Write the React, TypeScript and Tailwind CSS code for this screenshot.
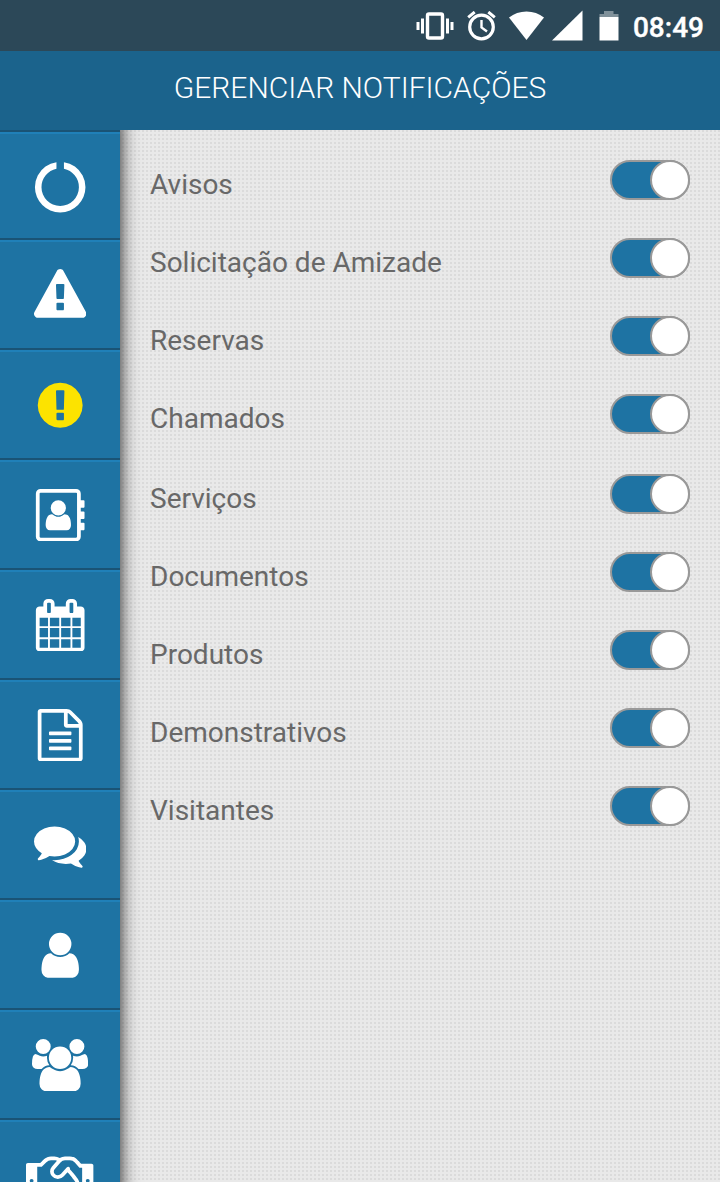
import { useState } from 'react';
import clsx from 'clsx';

interface MenuItem {
  name: string;
  path: string;
  width?: number;
  color?: string;
}

const menu: MenuItem[] = [
  {
    name: 'inicio',
    path: 'M1760 896q0 176-68.5 336t-184 275.5-275.5 184-336 68.5-336-68.5-275.5-184-184-275.5-68.5-336q0-213 97-398.5t265-305.5 374-151v228q-221 45-366.5 221t-145.5 406q0 130 51 248.5t136.5 204 204 136.5 248.5 51 248.5-51 204-136.5 136.5-204 51-248.5q0-230-145.5-406t-366.5-221v-228q206 31 374 151t265 305.5 97 398.5z',
  },
  {
    name: 'alertas',
    path: 'M1024 1375v-190q0-14-9.5-23.5t-22.5-9.5h-192q-13 0-22.5 9.5t-9.5 23.5v190q0 14 9.5 23.5t22.5 9.5h192q13 0 22.5-9.5t9.5-23.5zm-2-374l18-459q0-12-10-19-13-11-24-11h-220q-11 0-24 11-10 7-10 21l17 457q0 10 10 16.5t24 6.5h185q14 0 23.5-6.5t10.5-16.5zm-14-934l768 1408q35 63-2 126-17 29-46.5 46t-63.5 17h-1536q-34 0-63.5-17t-46.5-46q-37-63-2-126l768-1408q17-31 47-49t65-18 65 18 47 49z',
  },
  {
    name: 'avisos',
    color: 'text-[#fce300]',
    path: 'M896 128q209 0 385.5 103t279.5 279.5 103 385.5-103 385.5-279.5 279.5-385.5 103-385.5-103-279.5-279.5-103-385.5 103-385.5 279.5-279.5 385.5-103zm128 1247v-190q0-14-9-23.5t-22-9.5h-192q-13 0-23 10t-10 23v190q0 13 10 23t23 10h192q13 0 22-9.5t9-23.5zm-2-344l18-621q0-12-10-18-10-8-24-8h-220q-14 0-24 8-10 6-10 18l17 621q0 10 10 17.5t24 7.5h185q14 0 23.5-7.5t10.5-17.5z',
  },
  {
    name: 'contatos',
    path: 'M1092 644q0 107-76.5 183t-183.5 76-183.5-76-76.5-183q0-108 76.5-184t183.5-76 183.5 76 76.5 184zm-48 220q46 0 82.5 17t60 47.5 39.5 67 24 81 11.5 82.5 3.5 79q0 67-39.5 118.5t-105.5 51.5h-576q-66 0-105.5-51.5t-39.5-118.5q0-48 4.5-93.5t18.5-98.5 36.5-91.5 63-64.5 93.5-26h5q7 4 32 19.5t35.5 21 33 17 37 16 35 9 39.5 4.5 39.5-4.5 35-9 37-16 33-17 35.5-21 32-19.5zm684-256q0 13-9.5 22.5t-22.5 9.5h-96v128h96q13 0 22.5 9.5t9.5 22.5v192q0 13-9.5 22.5t-22.5 9.5h-96v128h96q13 0 22.5 9.5t9.5 22.5v192q0 13-9.5 22.5t-22.5 9.5h-96v224q0 66-47 113t-113 47h-1216q-66 0-113-47t-47-113v-1472q0-66 47-113t113-47h1216q66 0 113 47t47 113v224h96q13 0 22.5 9.5t9.5 22.5v192zm-256 1024v-1472q0-13-9.5-22.5t-22.5-9.5h-1216q-13 0-22.5 9.5t-9.5 22.5v1472q0 13 9.5 22.5t22.5 9.5h1216q13 0 22.5-9.5t9.5-22.5z',
  },
  {
    name: 'reservas',
    path: 'M192 1664h288v-288h-288v288zm352 0h320v-288h-320v288zm-352-352h288v-320h-288v320zm352 0h320v-320h-320v320zm-352-384h288v-288h-288v288zm736 736h320v-288h-320v288zm-384-736h320v-288h-320v288zm768 736h288v-288h-288v288zm-384-352h320v-320h-320v320zm-352-864v-288q0-13-9.5-22.5t-22.5-9.5h-64q-13 0-22.5 9.5t-9.5 22.5v288q0 13 9.5 22.5t22.5 9.5h64q13 0 22.5-9.5t9.5-22.5zm736 864h288v-320h-288v320zm-384-384h320v-288h-320v288zm384 0h288v-288h-288v288zm32-480v-288q0-13-9.5-22.5t-22.5-9.5h-64q-13 0-22.5 9.5t-9.5 22.5v288q0 13 9.5 22.5t22.5 9.5h64q13 0 22.5-9.5t9.5-22.5zm384-64v1280q0 52-38 90t-90 38h-1408q-52 0-90-38t-38-90v-1280q0-52 38-90t90-38h128v-96q0-66 47-113t113-47h64q66 0 113 47t47 113v96h384v-96q0-66 47-113t113-47h64q66 0 113 47t47 113v96h128q52 0 90 38t38 90z',
  },
  {
    name: 'documentos',
    path: 'M1596 380q28 28 48 76t20 88v1152q0 40-28 68t-68 28h-1344q-40 0-68-28t-28-68v-1600q0-40 28-68t68-28h896q40 0 88 20t76 48zm-444-244v376h376q-10-29-22-41l-313-313q-12-12-41-22zm384 1528v-1024h-416q-40 0-68-28t-28-68v-416h-768v1536h1280zm-1024-864q0-14 9-23t23-9h704q14 0 23 9t9 23v64q0 14-9 23t-23 9h-704q-14 0-23-9t-9-23v-64zm736 224q14 0 23 9t9 23v64q0 14-9 23t-23 9h-704q-14 0-23-9t-9-23v-64q0-14 9-23t23-9h704zm0 256q14 0 23 9t9 23v64q0 14-9 23t-23 9h-704q-14 0-23-9t-9-23v-64q0-14 9-23t23-9h704z',
  },
  {
    name: 'chamados',
    path: 'M1408 768q0 139-94 257t-256.5 186.5-353.5 68.5q-86 0-176-16-124 88-278 128-36 9-86 16h-3q-11 0-20.5-8t-11.5-21q-1-3-1-6.5t.5-6.5 2-6l2.5-5 3.5-5.5 4-5 4.5-5 4-4.5q5-6 23-25t26-29.5 22.5-29 25-38.5 20.5-44q-124-72-195-177t-71-224q0-139 94-257t256.5-186.5 353.5-68.5 353.5 68.5 256.5 186.5 94 257zm384 256q0 120-71 224.5t-195 176.5q10 24 20.5 44t25 38.5 22.5 29 26 29.5 23 25q1 1 4 4.5t4.5 5 4 5 3.5 5.5l2.5 5 2 6 .5 6.5-1 6.5q-3 14-13 22t-22 7q-50-7-86-16-154-40-278-128-90 16-176 16-271 0-472-132 58 4 88 4 161 0 309-45t264-129q125-92 192-212t67-254q0-77-23-152 129 71 204 178t75 230z',
  },
  {
    name: 'perfil',
    path: 'M1536 1399q0 109-62.5 187t-150.5 78h-854q-88 0-150.5-78t-62.5-187q0-85 8.5-160.5t31.5-152 58.5-131 94-89 134.5-34.5q131 128 313 128t313-128q76 0 134.5 34.5t94 89 58.5 131 31.5 152 8.5 160.5zm-256-887q0 159-112.5 271.5t-271.5 112.5-271.5-112.5-112.5-271.5 112.5-271.5 271.5-112.5 271.5 112.5 112.5 271.5z',
  },
  {
    name: 'visitantes',
    width: 1920,
    path: 'M593 896q-162 5-265 128h-134q-82 0-138-40.5t-56-118.5q0-353 124-353 6 0 43.5 21t97.5 42.5 119 21.5q67 0 133-23-5 37-5 66 0 139 81 256zm1071 637q0 120-73 189.5t-194 69.5h-874q-121 0-194-69.5t-73-189.5q0-53 3.5-103.5t14-109 26.5-108.5 43-97.5 62-81 85.5-53.5 111.5-20q10 0 43 21.5t73 48 107 48 135 21.5 135-21.5 107-48 73-48 43-21.5q61 0 111.5 20t85.5 53.5 62 81 43 97.5 26.5 108.5 14 109 3.5 103.5zm-1024-1277q0 106-75 181t-181 75-181-75-75-181 75-181 181-75 181 75 75 181zm704 384q0 159-112.5 271.5t-271.5 112.5-271.5-112.5-112.5-271.5 112.5-271.5 271.5-112.5 271.5 112.5 112.5 271.5zm576 225q0 78-56 118.5t-138 40.5h-134q-103-123-265-128 81-117 81-256 0-29-5-66 66 23 133 23 59 0 119-21.5t97.5-42.5 43.5-21q124 0 124 353zm-128-609q0 106-75 181t-181 75-181-75-75-181 75-181 181-75 181 75 75 181z',
  },
  {
    name: 'parceiros',
    width: 2304,
    path: 'M192 1152q40 0 56-32t0-64-56-32-56 32 0 64 56 32zm1473-58q-10-13-38.5-50t-41.5-54-38-49-42.5-53-40.5-47-45-49l-125 140q-83 94-208.5 92t-205.5-98q-57-69-56.5-158t58.5-157l177-206q-22-11-51-16.5t-47.5-6-56.5.5-49 1q-92 0-158 66l-158 158h-155v544q5 0 21-.5t22 0 19.5 2 20.5 4.5 17.5 8.5 18.5 13.5l297 292q115 111 227 111 78 0 125-47 57 20 112.5-8t72.5-85q74 6 127-44 20-18 36-45.5t14-50.5q10 10 43 10 43 0 77-21t49.5-53 12-71.5-30.5-73.5zm159 58h96v-512h-93l-157-180q-66-76-169-76h-167q-89 0-146 67l-209 243q-28 33-28 75t27 75q43 51 110 52t111-49l193-218q25-23 53.5-21.5t47 27 8.5 56.5q16 19 56 63t60 68q29 36 82.5 105.5t64.5 84.5q52 66 60 140zm288 0q40 0 56-32t0-64-56-32-56 32 0 64 56 32zm192-576v640q0 26-19 45t-45 19h-434q-27 65-82 106.5t-125 51.5q-33 48-80.5 81.5t-102.5 45.5q-42 53-104.5 81.5t-128.5 24.5q-60 34-126 39.5t-127.5-14-117-53.5-103.5-81l-287-282h-358q-26 0-45-19t-19-45v-672q0-26 19-45t45-19h421q14-14 47-48t47.5-48 44-40 50.5-37.5 51-25.5 62-19.5 68-5.5h117q99 0 181 56 82-56 181-56h167q35 0 67 6t56.5 14.5 51.5 26.5 44.5 31 43 39.5 39 41 41 44.5 41.5 45.5h355q26 0 45 19t19 45z',
  },
];

const notifications = [
  'Avisos',
  'Solicitação de Amizade',
  'Reservas',
  'Chamados',
  'Serviços',
  'Documentos',
  'Produtos',
  'Demonstrativos',
  'Visitantes',
];

function StatusBar() {
  return (
    <div className="flex h-[51px] shrink-0 items-center justify-end bg-[#2c4858] pr-4 text-white">
      {/* Vibrate */}
      <svg className="mr-[13px] h-[30px] w-[38px]" viewBox="0 0 38 30" fill="none" stroke="currentColor">
        <rect x="11.5" y="3" width="15" height="24" rx="1.5" strokeWidth="3.4" />
        <path d="M6.5 7.5v15M31.5 7.5v15" strokeWidth="3" />
        <path d="M2 11v8M36 11v8" strokeWidth="3" />
      </svg>
      {/* Alarm */}
      <svg className="mr-[13px] h-[30px] w-[29px]" viewBox="0 0 29 30" fill="none" stroke="currentColor">
        <circle cx="14.5" cy="16" r="11.8" strokeWidth="3.2" />
        <path d="M14.5 9v7.5l5.500 4" strokeWidth="2.4" />
        <path d="M1.2 6.300l6.500-5.300M27.800 6.300l-6.500-5.300" strokeWidth="3" />
      </svg>
      {/* Wifi */}
      <svg className="mr-2 h-[30px] w-[35px]" viewBox="0 0 35 30" fill="currentColor">
        <path d="M17.5 29L0 6.5Q7.5 .5 17.5 .5T35 6.500z" />
      </svg>
      {/* Signal */}
      <svg className="mr-4 h-[32px] w-[31px]" viewBox="0 0 31 32" fill="currentColor">
        <path d="M30.5 .5v30H0z" />
      </svg>
      {/* Battery */}
      <svg className="mr-[14px] h-[30px] w-[20px]" viewBox="0 0 20 30" fill="currentColor">
        <path d="M5 0h9.500v3h5v3H.5V3H5z" opacity=".4" />
        <path d="M.5 6h19v23.500H.5z" />
      </svg>
      <span className="pt-1 text-[28px] leading-none font-medium [-webkit-text-stroke:0.4px_white]">08:49</span>
    </div>
  );
}

function Sidebar() {
  return (
    <nav className="relative z-10 flex h-[1098px] w-[120px] shrink-0 flex-col bg-[#1e73a3] shadow-[0_-12px_17px_rgba(0,0,0,0.9)]">
      {menu.map((item, i) => (
        <button
          key={item.name}
          aria-label={item.name}
          className={clsx(
            'flex shrink-0 justify-center border-t-2 border-[#1a5375] pt-[29px] shadow-[inset_0_2px_0_#2080b8]',
            i === 0 ? 'h-[108px]' : 'h-[110px]',
            item.color ?? 'text-white',
          )}
        >
          <svg className="h-[52.4px]" viewBox={`0 0 ${item.width ?? 1792} 1792`} fill="currentColor">
            <path d={item.path} />
          </svg>
        </button>
      ))}
    </nav>
  );
}

interface ToggleProps {
  label: string;
  checked: boolean;
  onChange: () => void;
}

function Toggle({ label, checked, onChange }: ToggleProps) {
  return (
    <button
      role="switch"
      aria-label={label}
      aria-checked={checked}
      onClick={onChange}
      className={clsx(
        'flex h-10 w-20 rounded-full border-2 border-[#999]',
        checked ? 'justify-end bg-[#1e73a3]' : 'justify-start bg-white',
      )}
    >
      <span className="-m-0.5 h-10 w-10 rounded-full border-2 border-[#999] bg-white" />
    </button>
  );
}

export default function App() {
  const [enabled, setEnabled] = useState(() => notifications.map(() => true));

  const toggle = (index: number) => {
    setEnabled((prev) => prev.map((value, i) => (i === index ? !value : value)));
  };

  return (
    <div className="flex h-[1182px] w-[720px] flex-col overflow-hidden font-[Roboto,sans-serif]">
      <StatusBar />

      <header className="flex h-[79px] shrink-0 items-center justify-center bg-[#1b638c] pb-[5px]">
        <h1 className="text-[30px] leading-none font-light text-white">GERENCIAR NOTIFICAÇÕES</h1>
      </header>

      <div className="flex min-h-0 flex-1 overflow-hidden">
        <Sidebar />

        <main className="flex-1 bg-[#e9e9e9] bg-[conic-gradient(#dbdbdb_25%,transparent_0)] bg-[length:4px_4px] pt-[30px] pr-[30px] pl-[30px]">
          {notifications.map((label, i) => (
            <div key={label} className={clsx('flex items-start justify-between', i === 3 ? 'h-20' : 'h-[78px]')}>
              <span className="pt-2 text-[28px] leading-[33px] text-[#686868]">{label}</span>
              <Toggle label={label} checked={enabled[i]} onChange={() => toggle(i)} />
            </div>
          ))}
        </main>
      </div>
    </div>
  );
}
